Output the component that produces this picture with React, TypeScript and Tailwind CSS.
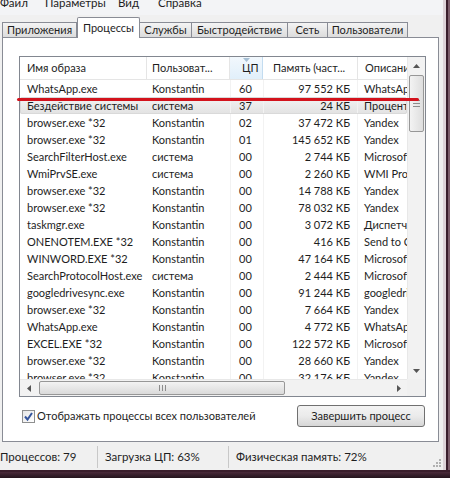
import React from 'react';

type Row = [string, string, string, string, string];

const rows: Row[] = [
  ['WhatsApp.exe', 'Konstantin', '60', '97 552 КБ', 'WhatsApp'],
  ['Бездействие системы', 'система', '37', '24 КБ', 'Процент'],
  ['browser.exe *32', 'Konstantin', '02', '37 472 КБ', 'Yandex'],
  ['browser.exe *32', 'Konstantin', '01', '145 652 КБ', 'Yandex'],
  ['SearchFilterHost.exe', 'система', '00', '2 744 КБ', 'Microsoft'],
  ['WmiPrvSE.exe', 'система', '00', '2 260 КБ', 'WMI Provider'],
  ['browser.exe *32', 'Konstantin', '00', '14 788 КБ', 'Yandex'],
  ['browser.exe *32', 'Konstantin', '00', '78 032 КБ', 'Yandex'],
  ['taskmgr.exe', 'Konstantin', '00', '3 072 КБ', 'Диспетчер'],
  ['ONENOTEM.EXE *32', 'Konstantin', '00', '416 КБ', 'Send to OneNote'],
  ['WINWORD.EXE *32', 'Konstantin', '00', '47 164 КБ', 'Microsoft'],
  ['SearchProtocolHost.exe', 'система', '00', '2 444 КБ', 'Microsoft'],
  ['googledrivesync.exe', 'Konstantin', '00', '91 244 КБ', 'googledrivesync'],
  ['browser.exe *32', 'Konstantin', '00', '7 664 КБ', 'Yandex'],
  ['WhatsApp.exe', 'Konstantin', '00', '4 772 КБ', 'WhatsApp'],
  ['EXCEL.EXE *32', 'Konstantin', '00', '122 572 КБ', 'Microsoft'],
  ['browser.exe *32', 'Konstantin', '00', '28 660 КБ', 'Yandex'],
  ['browser.exe *32', 'Konstantin', '00', '32 176 КБ', 'Yandex'],
];

const tabs = [
  { label: 'Приложения', w: 'w-[75px]' },
  { label: 'Процессы', w: 'w-[63px]', active: true },
  { label: 'Службы', w: 'w-[53px]' },
  { label: 'Быстродействие', w: 'w-[97px]' },
  { label: 'Сеть', w: 'w-[41px]' },
  { label: 'Пользователи', w: 'w-[81px]' },
];

function Arrow({ dir }: { dir: 'up' | 'down' | 'left' | 'right' }) {
  if (dir === 'up')
    return (
      <svg width="7" height="4" viewBox="0 0 7 4">
        <polygon points="0,4 3.5,0 7,4" fill="#555" />
      </svg>
    );
  if (dir === 'down')
    return (
      <svg width="7" height="4" viewBox="0 0 7 4">
        <polygon points="0,0 7,0 3.5,4" fill="#555" />
      </svg>
    );
  if (dir === 'left')
    return (
      <svg width="4" height="7" viewBox="0 0 4 7">
        <polygon points="4,0 4,7 0,3.5" fill="#555" />
      </svg>
    );
  return (
    <svg width="4" height="7" viewBox="0 0 4 7">
      <polygon points="0,0 0,7 4,3.5" fill="#555" />
    </svg>
  );
}

export default function App() {
  return (
    <div className="relative w-[450px] h-[478px] overflow-hidden flex flex-col bg-[#2a1822] font-['Lato','Noto_Sans',sans-serif] text-[11px] text-[#1e1e1e]">
      <div className="flex h-[470px]">
        {/* window body */}
        <div className="w-[443px] flex flex-col bg-[#f0f0f0]">
          {/* menu bar, top cropped */}
          <div className="h-[15px] overflow-hidden bg-[#f3f4f6]">
            <div className="flex -mt-[5px] leading-[16px] text-[11.5px]">
              <span className="w-[45px]">Файл</span>
              <span className="w-[73px]">Параметры</span>
              <span className="w-[40px]">Вид</span>
              <span>Справка</span>
            </div>
          </div>

          {/* tab strip */}
          <div className="h-[22px] flex items-end pl-[2px] relative z-10">
            {tabs.map((t) =>
              t.active ? (
                <div
                  key={t.label}
                  className={`${t.w} h-[21px] -mb-px bg-white border border-b-0 border-[#898c95] rounded-t-[2px] flex items-start justify-center pt-[2px] leading-[16px]`}
                >
                  {t.label}
                </div>
              ) : (
                <div
                  key={t.label}
                  className={`${t.w} h-[15px] bg-linear-to-b from-[#f4f4f4] to-[#dcdcdc] border border-b-0 border-[#898c95] -ml-px first:ml-0 flex items-center justify-center leading-[14px]`}
                >
                  {t.label}
                </div>
              ),
            )}
          </div>

          {/* tab panel */}
          <div className="ml-[2px] w-[437px] h-[405px] border border-[#898c95] bg-white pl-[16px] pt-[18px]">
            {/* list box */}
            <div className="w-[407px] h-[341px] border border-[#828790] flex flex-col bg-white">
              <div className="flex h-[322px]">
                <div className="w-[387px] overflow-hidden">
                  {/* header */}
                  <div className="flex h-[23px] border-b border-[#e5e5e5] leading-[22px] whitespace-nowrap">
                    <div className="w-[127px] shrink-0 pl-[7px] border-r border-[#e5e5e5]">Имя образа</div>
                    <div className="w-[83px] shrink-0 pl-[5px] border-r border-[#e5e5e5]">Пользоват...</div>
                    <div className="relative w-[33px] shrink-0 pl-[12px] bg-linear-to-b from-[#f2f8fd] to-[#e1effa] border-r border-[#c3dcf0]">
                      ЦП
                      <svg className="absolute left-[13px] top-[1px]" width="7" height="4" viewBox="0 0 7 4">
                        <polygon points="0,0 7,0 3.5,4" fill="#a6bfd4" />
                      </svg>
                    </div>
                    <div className="w-[95px] shrink-0 pl-[10px] border-r border-[#e5e5e5]">Память (част...</div>
                    <div className="w-[120px] shrink-0 pl-[7px]">Описание</div>
                  </div>
                  {/* rows */}
                  {rows.map((r, i) => (
                    <div
                      key={i}
                      className={`flex h-[17px] leading-[17px] whitespace-nowrap ${
                        i === 1 ? 'bg-linear-to-b from-[#f3f3f3] to-[#e2e2e2] outline outline-[#d9d9d9] -outline-offset-1 rounded-[2px]' : ''
                      }`}
                    >
                      <div className="w-[127px] shrink-0 pl-[7px] overflow-hidden">{r[0]}</div>
                      <div className="w-[83px] shrink-0 pl-[5px] overflow-hidden">{r[1]}</div>
                      <div className="w-[33px] shrink-0 pl-[8px] border-l border-[#f2f2f2]">{r[2]}</div>
                      <div className="w-[95px] shrink-0 pr-[7px] text-right border-l border-r border-[#f2f2f2]">{r[3]}</div>
                      <div className="w-[120px] shrink-0 pl-[6px]">{r[4]}</div>
                    </div>
                  ))}
                </div>
                {/* vertical scrollbar */}
                <div className="w-[18px] flex flex-col bg-[#f2f2f2] border-l border-[#e8e8e8]">
                  <div className="h-[17px] flex items-center justify-center">
                    <Arrow dir="up" />
                  </div>
                  <div className="mt-px mx-[1px] h-[57px] rounded-[2px] border border-[#979797] bg-linear-to-r from-[#f3f3f3] to-[#dedede] flex items-center justify-center">
                    <div className="flex flex-col gap-[2px]">
                      <div className="w-[7px] h-px bg-[#8c8c8c]" />
                      <div className="w-[7px] h-px bg-[#8c8c8c]" />
                      <div className="w-[7px] h-px bg-[#8c8c8c]" />
                    </div>
                  </div>
                  <div className="flex-1" />
                  <div className="h-[17px] flex items-center justify-center">
                    <Arrow dir="down" />
                  </div>
                </div>
              </div>
              {/* horizontal scrollbar */}
              <div className="flex h-[17px]">
                <div className="w-[387px] flex items-center bg-[#f2f2f2] border-t border-[#e8e8e8]">
                  <div className="w-[17px] flex justify-center">
                    <Arrow dir="left" />
                  </div>
                  <div className="ml-[2px] w-[246px] h-[14px] rounded-[2px] border border-[#979797] bg-linear-to-b from-[#f3f3f3] to-[#dadada] flex items-center justify-center gap-[2px]">
                    <div className="w-px h-[6px] bg-[#8c8c8c]" />
                    <div className="w-px h-[6px] bg-[#8c8c8c]" />
                    <div className="w-px h-[6px] bg-[#8c8c8c]" />
                  </div>
                  <div className="flex-1" />
                  <div className="w-[17px] flex justify-center">
                    <Arrow dir="right" />
                  </div>
                </div>
                <div className="w-[18px] bg-[#f0f0f0]" />
              </div>
            </div>

            {/* checkbox + button */}
            <div className="w-[407px] mt-[8px] h-[22px] flex items-center">
              <div className="ml-[3px] w-[13px] h-[13px] border border-[#8e8f8f] bg-linear-to-br from-[#e6e6e6] to-[#ffffff] flex items-center justify-center">
                <svg width="11" height="11" viewBox="0 0 11 11">
                  <path d="M2 5.5 L4.5 8.5 L9 2" fill="none" stroke="#35559c" strokeWidth="2" />
                </svg>
              </div>
              <span className="ml-[2px] leading-[16px]">Отображать процессы всех пользователей</span>
              <div className="ml-auto mr-[1px] w-[128px] h-[22px] rounded-[3px] border border-[#707070] bg-linear-to-b from-[#f3f3f3] via-[#ebebeb] to-[#d6d6d6] flex items-center justify-center">
                Завершить процесс
              </div>
            </div>
          </div>

          {/* status bar */}
          <div className="flex-1 flex items-center pt-[2px] relative text-[11.5px]">
            <div className="w-[97px] leading-[16px]">Процессов: 79</div>
            <div className="w-px h-[22px] bg-[#c8c8c8]" />
            <div className="w-[130px] pl-[7px] leading-[16px]">Загрузка ЦП: 63%</div>
            <div className="w-px h-[22px] bg-[#c8c8c8]" />
            <div className="pl-[7px] leading-[16px]">Физическая память: 72%</div>
            <div className="ml-auto mr-[2px] self-end mb-[3px] grid grid-cols-3 gap-[1px]">
              <div />
              <div />
              <div className="w-[2px] h-[2px] bg-[#b0b0b0]" />
              <div />
              <div className="w-[2px] h-[2px] bg-[#b0b0b0]" />
              <div className="w-[2px] h-[2px] bg-[#b0b0b0]" />
              <div className="w-[2px] h-[2px] bg-[#b0b0b0]" />
              <div className="w-[2px] h-[2px] bg-[#b0b0b0]" />
              <div className="w-[2px] h-[2px] bg-[#b0b0b0]" />
            </div>
          </div>
        </div>

        {/* right window frame */}
        <div className="w-[7px] flex">
          <div className="w-[3px] bg-[#ddd3d8]" />
          <div className="w-[2px] bg-[#3a1e2c]" />
          <div className="w-[2px] bg-[#7c5d6b]" />
        </div>
      </div>

      {/* bottom window frame */}
      <div className="h-[8px] flex flex-col">
        <div className="h-[2px] bg-[#3a1e2c]" />
        <div className="flex-1 bg-linear-to-b from-[#4a2a3a] to-[#24141d]" />
      </div>

      {/* red annotation line */}
      <div className="absolute left-[17px] top-[98px] w-[402px] h-[3px] rounded-full bg-[#d3121c]" />
    </div>
  );
}
